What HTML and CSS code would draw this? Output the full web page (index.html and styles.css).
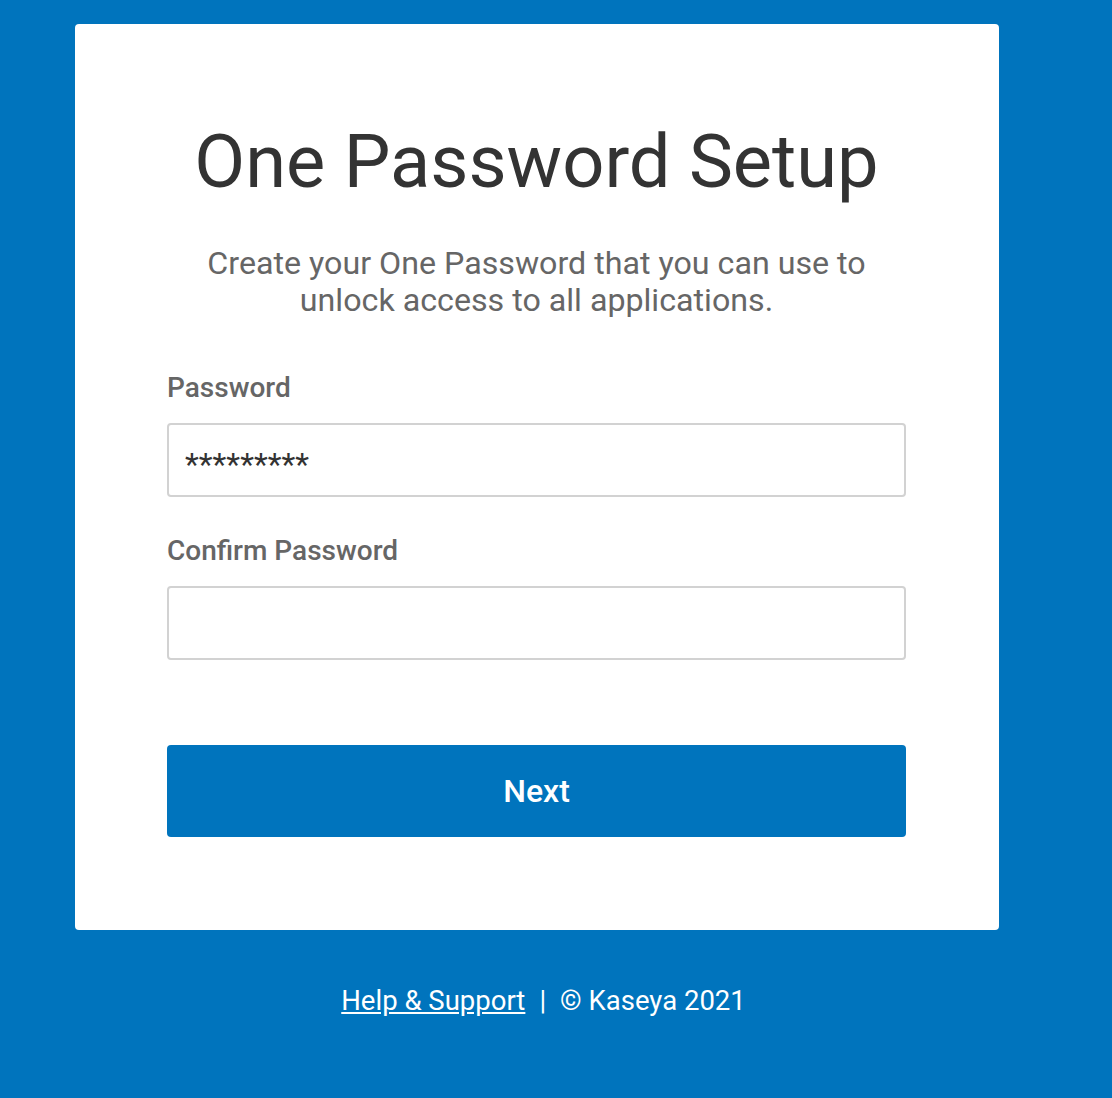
FILE: index.html
```html
<!DOCTYPE html>
<html lang="en">
<head>
    <meta charset="UTF-8">
    <meta name="viewport" content="width=device-width, initial-scale=1.0">
    <title>One Password Setup</title>
    <link rel="stylesheet" href="styles.css">
</head>
<body>
    <div class="page">
        <div class="card">
            <h1>One Password Setup</h1>
            <p class="intro">Create your One Password that you can use to<br>unlock access to all applications.</p>

            <label class="field-label" for="password">Password</label>
            <input type="text" id="password" class="field-input" value="*********">

            <label class="field-label" for="confirm_password">Confirm Password</label>
            <input type="text" id="confirm_password" class="field-input" value="">

            <button class="next-btn">Next</button>
        </div>

        <div class="footer">
            <a href="#">Help &amp; Support</a><span class="sep">|</span>© Kaseya 2021
        </div>
    </div>
</body>
</html>
```

FILE: styles.css
```css
html, body {
    margin: 0;
    padding: 0;
}
body {
    font-family: Roboto, "Liberation Sans", sans-serif;
    background-color: #0074bd;
    min-height: 1098px;
}
.page {
    width: 924px;
    margin-left: 75px;
    padding-top: 24px;
}
.card {
    background: white;
    border-radius: 4px;
    padding: 101px 93px 93px 92px;
    display: flex;
    flex-direction: column;
}
h1 {
    margin: 0;
    font-size: 74px;
    line-height: 74px;
    font-weight: 400;
    color: #333;
    text-align: center;
    white-space: nowrap;
}
.intro {
    margin: 46px 0 0;
    font-size: 32.2px;
    line-height: 37px;
    color: #666;
    text-align: center;
}
.field-label {
    margin-top: 53px;
    font-size: 28px;
    line-height: 32px;
    font-weight: 500;
    color: #666;
}
.field-label + .field-input {
    margin-top: 19px;
}
.field-input + .field-label {
    margin-top: 38px;
}
.field-input {
    box-sizing: border-box;
    height: 74px;
    padding: 8px 16px 0;
    font-family: inherit;
    font-size: 32px;
    color: #333;
    border: 2px solid #d2d2d2;
    border-radius: 4px;
    outline: none;
}
.next-btn {
    margin-top: 85px;
    height: 92px;
    font-family: inherit;
    font-size: 32px;
    font-weight: 500;
    color: white;
    background-color: #0074bd;
    border: none;
    border-radius: 4px;
    cursor: pointer;
}
.footer {
    margin-top: 56px;
    padding-left: 13px;
    text-align: center;
    font-size: 27.5px;
    line-height: 30px;
    color: white;
}
.footer a {
    color: white;
}
.sep {
    margin: 0 14px;
}
```
